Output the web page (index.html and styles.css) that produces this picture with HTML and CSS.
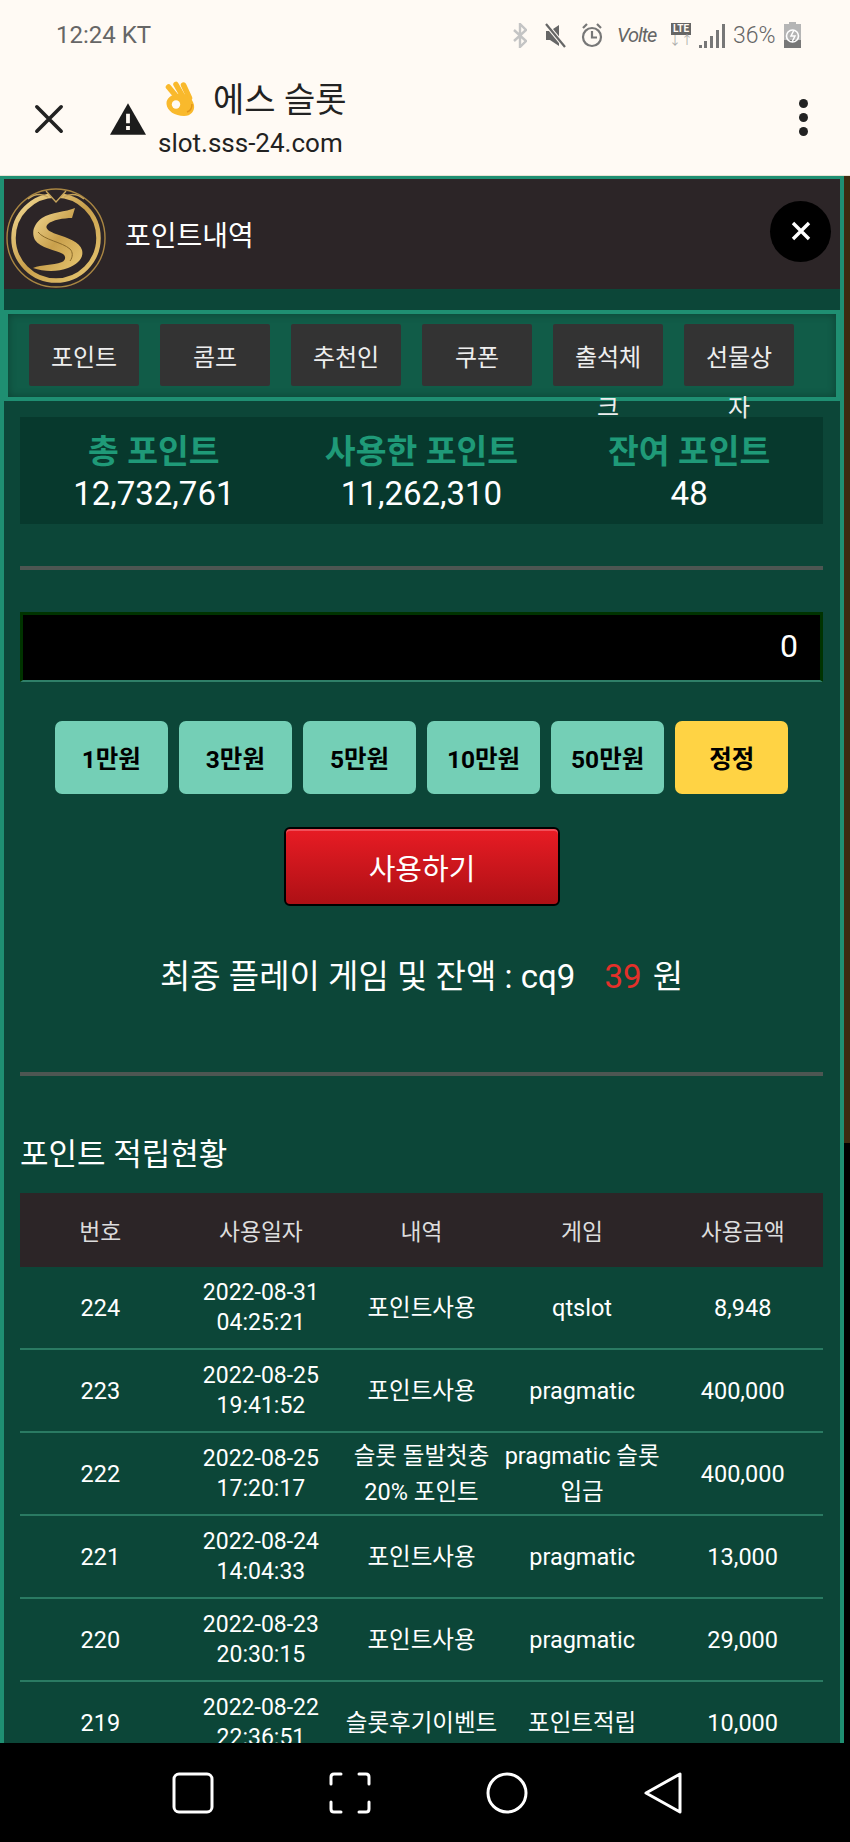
FILE: index.html
```html
<!DOCTYPE html>
<html lang="ko">
<head>
  <meta charset="UTF-8" />
  <meta name="viewport" content="width=device-width, initial-scale=1.0" />
  <title>포인트내역</title>
  <link rel="stylesheet" href="styles.css">
</head>
<body>
  <div class="status-bar">
    <span class="status-time">12:24 KT</span>
    <div class="status-icons">
      <svg class="ic-bt" width="14" height="25" viewBox="0 0 14 25" fill="none" stroke="#c4c4c4" stroke-width="2.400"><path d="M1 7l12 11-6 6V1l6 6L1 18"/></svg>
      <svg class="ic-mute" width="21" height="25" viewBox="0 0 21 25" fill="#666"><path d="M1 8h4l9-6v21l-9-6H1z"/><path d="M1 1l19 23" stroke="#fffaf4" stroke-width="4.400"/><path d="M1 1l19 23" stroke="#666" stroke-width="2.200"/></svg>
      <svg class="ic-alarm" width="22" height="26" viewBox="0 0 22 26" fill="none" stroke="#777" stroke-width="2.200"><circle cx="11" cy="15" r="9"/><path d="M11 9v6.500h5M2 6l4-4M20 6l-4-4"/></svg>
      <span class="status-volte">Volte</span>
      <span class="status-lte"><b>LTE</b><i>↓↑</i></span>
      <svg class="ic-signal" width="26" height="25" viewBox="0 0 26 25" fill="#777"><path d="M0 22h3v3H0zM5 18h3v7H5zM11 13h3v12h-3zM17 7h3v18h-3zM23 1h3v24h-3z"/></svg>
      <span class="status-pct">36%</span>
      <svg class="ic-batt" width="17" height="26" viewBox="0 0 17 26"><path d="M5 0h7v2h5v24H0V2h5z" fill="#b5b5b5"/><path d="M0 18h17v8H0z" fill="#777"/><circle cx="8.500" cy="14" r="6" fill="none" stroke="#fff" stroke-width="1.600"/><path d="M10 8l-3 6h4l-3 6" fill="none" stroke="#fff" stroke-width="1.500"/></svg>
    </div>
  </div>

  <div class="browser-bar">
    <svg class="browser-close" width="30" height="30" viewBox="0 0 32 32" stroke="#222" stroke-width="3.800" stroke-linecap="round"><path d="M3 3l26 26M29 3L3 29"/></svg>
    <svg class="browser-warn" width="36" height="32" viewBox="0 0 38 33"><path d="M19 0l19 33H0z" fill="#1c1c1c"/><path d="M17 11h4v10h-4zM17 24h4v4h-4z" fill="#fffaf4"/></svg>
    <div class="browser-site">
      <div class="browser-title">
        <svg class="ok-hand" width="30" height="36" viewBox="0 0 30 36">
          <g fill="none" stroke="#f9b92c" stroke-width="5.500" stroke-linecap="round">
            <path d="M3.500 6l10 12"/>
            <path d="M11 3.500l8 14"/>
            <path d="M18.500 4l6 13"/>
          </g>
          <path d="M14 13c6-1 13 3 15 11 1 6-3 11-10 11C10 35 2 30 1.500 23 1 17 7 13 14 13z" fill="#f9b92c"/>
          <path d="M22 31c3-1 5-4 5-8" fill="none" stroke="#e2951a" stroke-width="1.500"/>
          <circle cx="11" cy="23.500" r="4.200" fill="#fffaf4"/>
        </svg>
        <span class="browser-name">에스 슬롯</span>
      </div>
      <div class="browser-url">slot.sss-24.com</div>
    </div>
    <div class="browser-menu"><i></i><i></i><i></i></div>
  </div>

  <div class="viewport">
    <main class="frame">
      <header class="popup-head">
        <svg class="logo" width="100" height="100" viewBox="0 0 100 100">
          <defs>
            <linearGradient id="gold" x1="0" y1="0" x2="1" y2="1">
              <stop offset="0" stop-color="#f2da95"/>
              <stop offset="0.5" stop-color="#c9a04c"/>
              <stop offset="1" stop-color="#e8c873"/>
            </linearGradient>
          </defs>
          <circle cx="50" cy="50" r="49" fill="none" stroke="#a98642" stroke-width="1.400"/>
          <circle cx="50" cy="50" r="42.500" fill="none" stroke="url(#gold)" stroke-width="4.500"/>
          <path d="M40 3l10 11L60 3" fill="#2c2527" stroke="#c6a45c" stroke-width="1.400"/>
          <path d="M22 11c6-5 13-6 20-2M78 11c-6-5-13-6-20-2" fill="none" stroke="#c6a45c" stroke-width="1.400"/>
          <path d="M69 20C60 24 45 24 36 30 28 36 25 44 29 52c5 8 21 10 28 14 3 2 3 6-1 8-10 4-20 2-29 6 11 4 25 4 35 0 10-4 16-10 14-18-2-8-14-12-26-16-8-3-12-6-8-10 4-4 16-6 24-6z" fill="url(#gold)"/>
          <path d="M32 44c6 8 24 10 32 17 3 3 3 8 0 12" fill="none" stroke="#8a6a2a" stroke-width="1"/>
        </svg>
        <h1 class="popup-title">포인트내역</h1>
        <button class="popup-close">
          <svg width="20" height="20" viewBox="0 0 20 20" stroke="#fff" stroke-width="3.400"><path d="M2 2l16 16M18 2L2 18"/></svg>
        </button>
      </header>

      <nav class="tabs">
        <a class="tab">포인트</a>
        <a class="tab">콤프</a>
        <a class="tab">추천인</a>
        <a class="tab">쿠폰</a>
        <a class="tab">출석체크</a>
        <a class="tab">선물상자</a>
      </nav>

      <section class="content">
        <div class="stats">
          <div class="stat"><strong>총 포인트</strong><span>12,732,761</span></div>
          <div class="stat"><strong>사용한 포인트</strong><span>11,262,310</span></div>
          <div class="stat"><strong>잔여 포인트</strong><span>48</span></div>
        </div>

        <hr class="divider divider-top">

        <div class="amount-input">0</div>

        <div class="amounts">
          <button class="amount">1만원</button>
          <button class="amount">3만원</button>
          <button class="amount">5만원</button>
          <button class="amount">10만원</button>
          <button class="amount">50만원</button>
          <button class="amount amount-reset">정정</button>
        </div>

        <button class="use-btn">사용하기</button>

        <p class="last-game">최종 플레이 게임 및 잔액 : cq9 <span class="last-money">39</span> 원</p>

        <hr class="divider divider-bottom">

        <h2 class="history-title">포인트 적립현황</h2>

        <table class="history">
          <thead>
            <tr><th>번호</th><th>사용일자</th><th>내역</th><th>게임</th><th>사용금액</th></tr>
          </thead>
          <tbody>
            <tr><td>224</td><td class="date">2022-08-31<br>04:25:21</td><td>포인트사용</td><td>qtslot</td><td>8,948</td></tr>
            <tr><td>223</td><td class="date">2022-08-25<br>19:41:52</td><td>포인트사용</td><td>pragmatic</td><td>400,000</td></tr>
            <tr><td>222</td><td class="date">2022-08-25<br>17:20:17</td><td>슬롯 돌발첫충<br>20% 포인트</td><td>pragmatic 슬롯<br>입금</td><td>400,000</td></tr>
            <tr><td>221</td><td class="date">2022-08-24<br>14:04:33</td><td>포인트사용</td><td>pragmatic</td><td>13,000</td></tr>
            <tr><td>220</td><td class="date">2022-08-23<br>20:30:15</td><td>포인트사용</td><td>pragmatic</td><td>29,000</td></tr>
            <tr><td>219</td><td class="date">2022-08-22<br>22:36:51</td><td>슬롯후기이벤트</td><td>포인트적립</td><td>10,000</td></tr>
          </tbody>
        </table>
      </section>
    </main>
    <div class="scroll-edge"><div class="scroll-thumb"></div></div>
  </div>

  <div class="nav-bar">
    <svg width="42" height="42" viewBox="0 0 42 42" fill="none" stroke="#fff" stroke-width="3"><rect x="2" y="2" width="38" height="38" rx="5"/></svg>
    <svg width="42" height="42" viewBox="0 0 42 42" fill="none" stroke="#fff" stroke-width="3" stroke-linecap="round"><path d="M2 12V5c0-2 1-3 3-3h7M30 2h7c2 0 3 1 3 3v7M40 30v7c0 2-1 3-3 3h-7M12 40H5c-2 0-3-1-3-3v-7"/></svg>
    <svg width="42" height="42" viewBox="0 0 42 42" fill="none" stroke="#fff" stroke-width="3"><circle cx="21" cy="21" r="19"/></svg>
    <svg width="40" height="42" viewBox="0 0 40 42" fill="none" stroke="#fff" stroke-width="3" stroke-linejoin="round"><path d="M37 2v38L3 21z"/></svg>
  </div>
</body>
</html>
```

FILE: styles.css
```css
:root {
  --paper: #fffaf4;
  --edge: #1f8f72;
  --main-green: #0c4638;
  --dark-panel: #2c2527;
  --mint: #74cfb6;
}

html, body {
  margin: 0;
  height: 100%;
}

body {
  width: 850px;
  height: 1842px;
  overflow: hidden;
  display: flex;
  flex-direction: column;
  background: #000;
  font-family: Roboto, "Noto Sans CJK KR", sans-serif;
  color: #fff;
}

/* phone chrome */
.status-bar {
  height: 60px;
  box-sizing: border-box;
  padding: 10px 49px 0 56px;
  display: flex;
  justify-content: space-between;
  align-items: center;
  background: var(--paper);
  color: #666;
  font-size: 24px;
}

.status-icons {
  display: flex;
  align-items: center;
}

.ic-mute {
  margin-left: 18px;
}

.ic-alarm {
  margin-left: 15px;
}

.status-volte {
  width: 38px;
  margin-left: 14px;
  font-size: 20px;
  font-style: italic;
  letter-spacing: -1px;
  white-space: nowrap;
}

.status-lte {
  width: 22px;
  margin-left: 15px;
  display: flex;
  flex-direction: column;
  align-items: center;
  line-height: 1;
}

.status-lte b {
  background: #666;
  color: var(--paper);
  font-size: 10px;
  padding: 1px 2px;
}

.status-lte i {
  font-size: 12px;
  font-style: normal;
  color: #aaa;
}

.ic-signal {
  margin-left: 7px;
}

.status-pct {
  width: 40px;
  margin-left: 8px;
  font-size: 23px;
  font-weight: 300;
  white-space: nowrap;
}

.ic-batt {
  margin-left: 11px;
}

.browser-bar {
  height: 116px;
  box-sizing: border-box;
  padding: 0 42px 0 34px;
  display: flex;
  align-items: center;
  background: var(--paper);
  color: #222;
  border-bottom: 1px solid #e8e2d4;
}

.browser-close {
  margin-right: 46px;
  margin-top: 2px;
}

.browser-warn {
  margin: 2px 19px 0 0;
}

.browser-site {
  flex: 1;
}

.browser-title {
  display: flex;
  align-items: center;
  gap: 18px;
  height: 44px;
  margin-bottom: 6px;
}

.ok-hand {
  margin-top: -2px;
}

.browser-name {
  font-size: 34px;
  line-height: 44px;
}

.browser-url {
  font-size: 26px;
  margin-left: -7px;
  line-height: 30px;
}

.browser-menu {
  display: flex;
  flex-direction: column;
  gap: 5px;
}

.browser-menu i {
  width: 9px;
  height: 9px;
  border-radius: 50%;
  background: #222;
}

/* page */
.viewport {
  flex: 1;
  min-height: 0;
  display: flex;
  overflow: hidden;
}

.frame {
  width: 844px;
  box-sizing: border-box;
  border: solid var(--edge);
  border-width: 3px 4px 0;
  background: var(--main-green);
}

.scroll-edge {
  flex: 1;
  background: #000;
}

.scroll-thumb {
  height: 967px;
  background: #3d2a10;
}

.popup-head {
  height: 110px;
  display: flex;
  align-items: center;
  background: var(--dark-panel);
}

.logo {
  align-self: flex-end;
  margin: 0 19px 1px 2px;
}

.popup-title {
  flex: 1;
  margin: 0;
  font-size: 28px;
  font-weight: 400;
}

.popup-close {
  width: 61px;
  height: 61px;
  margin: 0 9px 6px 0;
  padding: 0;
  display: flex;
  align-items: center;
  justify-content: center;
  border: none;
  border-radius: 50%;
  background: #000;
}

.tabs {
  margin-top: 21px;
  height: 91px;
  box-sizing: border-box;
  padding: 10px 21px;
  display: flex;
  gap: 21px;
  border: 4px solid var(--edge);
  background: #115c48;
  box-shadow: inset 0 0 8px rgba(0, 0, 0, 0.3);
}

.tab {
  width: 110px;
  height: 62px;
  flex: none;
  box-sizing: border-box;
  padding: 9px 12px 0;
  border-radius: 2px;
  background: #333;
  font-size: 24px;
  line-height: 50px;
  text-align: center;
  word-break: break-all;
  color: #eee;
}

.content {
  padding: 16px 17px 0 16px;
}

.stats {
  display: grid;
  grid-template-columns: repeat(3, 1fr);
  padding: 14px 0 9px;
  background: #07392d;
  text-align: center;
}

.stat strong {
  display: block;
  font-size: 33.500px;
  line-height: 42px;
  color: #1f9a78;
}

.stat span {
  display: block;
  font-size: 33px;
  line-height: 42px;
}

.divider {
  height: 4px;
  margin: 0;
  border: none;
  background: #4d5652;
}

.divider-top {
  margin-top: 42px;
}

.divider-bottom {
  margin-top: 74px;
}

.amount-input {
  margin-top: 42px;
  height: 70px;
  box-sizing: border-box;
  padding-right: 22px;
  border: 3px solid #003300;
  border-bottom: 2px solid #2f7f68;
  background: #000;
  font-size: 32px;
  line-height: 62px;
  text-align: right;
}

.amounts {
  margin-top: 39px;
  display: flex;
  justify-content: center;
  gap: 10.800px;
}

.amount {
  width: 113.300px;
  height: 73px;
  padding: 0;
  border: none;
  border-radius: 7px;
  background: var(--mint);
  font-family: inherit;
  font-size: 24.500px;
  font-weight: 700;
  color: #000;
}

.amount-reset {
  background: #ffd344;
}

.use-btn {
  display: block;
  width: 276px;
  height: 79px;
  margin: 33px 0 0 264px;
  padding: 0;
  border: 2px solid #000;
  border-radius: 6px;
  background: linear-gradient(#e81c24 0%, #ae1015 100%);
  box-shadow: inset 0 2px 0 #f0505a;
  font-family: inherit;
  font-size: 29px;
  color: #fff;
}

.last-game {
  margin: 50px 0 0;
  font-size: 33px;
  line-height: 42px;
  text-align: center;
  white-space: pre-wrap;
}

.last-money {
  margin: 0 3px 0 21px;
  color: #e4302a;
}

.history-title {
  margin: 57px 0 0;
  font-size: 31px;
  font-weight: 400;
  line-height: 44px;
}

.history {
  margin-top: 16px;
  width: 100%;
  table-layout: fixed;
  border-collapse: collapse;
  font-size: 23.500px;
  text-align: center;
}

.history th {
  height: 74px;
  padding: 0;
  background: var(--dark-panel);
  font-weight: 400;
  font-size: 22.800px;
  color: #ddd;
}

.history td {
  height: 81px;
  padding: 0;
  border-bottom: 2px solid #2a7a62;
  line-height: 36px;
}

.history td.date {
  font-size: 23px;
  line-height: 30px;
}

.nav-bar {
  height: 99px;
  flex: none;
  padding: 0 0 0 172px;
  display: flex;
  align-items: center;
  gap: 115px;
  background: #000;
}
```
